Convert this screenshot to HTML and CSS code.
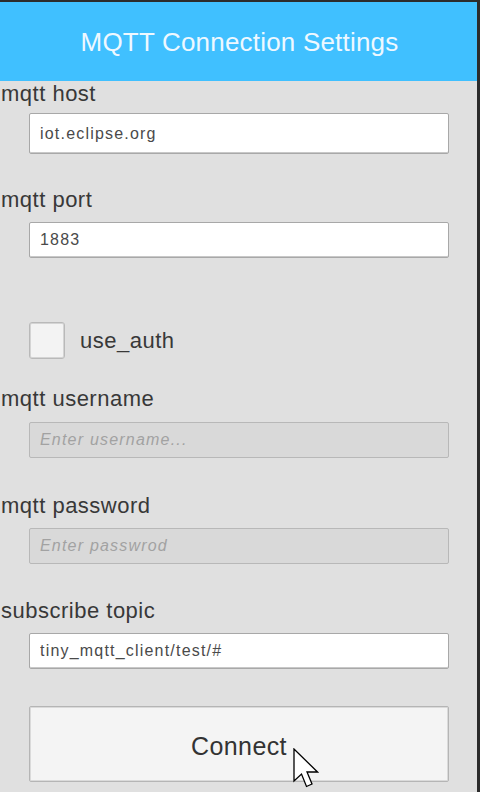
FILE: index.html
```html
<!DOCTYPE html>
<html lang="en">
<head>
<meta charset="utf-8">
<title>MQTT Connection Settings</title>
<link rel="stylesheet" href="styles.css">
</head>
<body>
<div class="app">
  <header class="header">
    <h1 class="title">MQTT Connection Settings</h1>
  </header>
  <main class="form">
    <div class="field field-host">
      <label class="label">mqtt host</label>
      <input class="input input-tall" type="text" value="iot.eclipse.org">
    </div>
    <div class="field field-port">
      <label class="label">mqtt port</label>
      <input class="input" type="text" value="1883">
    </div>
    <div class="check-row">
      <input class="checkbox" type="checkbox">
      <span class="check-label">use_auth</span>
    </div>
    <div class="field field-user">
      <label class="label">mqtt username</label>
      <input class="input input-disabled" type="text" placeholder="Enter username..." disabled>
    </div>
    <div class="field field-pass">
      <label class="label">mqtt password</label>
      <input class="input input-disabled" type="text" placeholder="Enter passwrod" disabled>
    </div>
    <div class="field field-topic">
      <label class="label">subscribe topic</label>
      <input class="input" type="text" value="tiny_mqtt_client/test/#">
    </div>
    <div class="button-wrap">
      <button class="button" type="button">Connect</button>
      <svg class="cursor" width="26" height="42" viewBox="0 0 26 42" aria-hidden="true">
        <polygon points="1,1 1,33 8.5,26 13.5,38.5 19,36 14,24 24.5,24" fill="#ffffff" stroke="#000000" stroke-width="1.3" stroke-linejoin="miter"/>
      </svg>
    </div>
  </main>
</div>
</body>
</html>
```
FILE: styles.css
```css
* {
  box-sizing: border-box;
}

html, body {
  margin: 0;
  padding: 0;
}

body {
  width: 480px;
  height: 792px;
  overflow: hidden;
  background: #2c2c2c;
  font-family: "Liberation Sans", Arial, sans-serif;
}

.app {
  width: 477px;
  height: 790px;
  margin-top: 2px;
  background: #e0e0e0;
  display: flex;
  flex-direction: column;
}

.header {
  height: 79px;
  background: #40c0ff;
  display: flex;
  align-items: center;
  justify-content: center;
  padding-left: 2px;
}

.title {
  margin: 0;
  font-size: 26px;
  font-weight: normal;
  letter-spacing: 0.2px;
  color: #eef8ff;
  line-height: 30px;
}

.form {
  display: flex;
  flex-direction: column;
}

.field {
  display: flex;
  flex-direction: column;
}

.label {
  font-size: 22px;
  line-height: 26px;
  letter-spacing: 0.5px;
  color: #383838;
  padding-left: 1px;
}

.input {
  display: block;
  margin: 9px 0 0 29px;
  width: 420px;
  height: 36px;
  padding: 0 0 0 10px;
  border: 1px solid #a8a8a8;
  border-radius: 2px;
  background: #ffffff;
  font-family: "Liberation Sans", Arial, sans-serif;
  font-size: 16px;
  letter-spacing: 1.2px;
  color: #4a4a4a;
  outline: none;
  box-shadow: inset 0 -1px 0 #c8c8c8;
}

.input-tall {
  height: 41px;
  margin-top: 6px;
}

.input-disabled {
  background: #d9d9d9;
  border-color: #b8b8b8;
  box-shadow: none;
}

.input-disabled::placeholder {
  font-style: italic;
  color: #a2a2a2;
}

.field-port {
  margin-top: 33px;
}

.check-row {
  margin-top: 64px;
  display: flex;
  align-items: center;
  height: 37px;
}

.checkbox {
  appearance: none;
  -webkit-appearance: none;
  margin: 0 0 0 29px;
  width: 36px;
  height: 37px;
  background: #f3f3f3;
  border: 1px solid #b9b9b9;
  border-radius: 3px;
  box-shadow: inset 0 0 0 1px #d4d4d4;
}

.check-label {
  margin-left: 15px;
  font-size: 22px;
  line-height: 36px;
  letter-spacing: 0.5px;
  color: #383838;
}

.field-user {
  margin-top: 27px;
}

.field-user .input {
  margin-top: 10px;
}

.field-pass {
  margin-top: 35px;
}

.field-topic {
  margin-top: 34px;
}

.button-wrap {
  position: relative;
  margin: 37px 0 0 29px;
  width: 420px;
}

.button {
  display: block;
  width: 420px;
  height: 76px;
  background: #f4f4f4;
  border: 1px solid #b5b5b5;
  border-radius: 2px;
  box-shadow: inset 0 0 0 1px #dadada;
  font-family: "Liberation Sans", Arial, sans-serif;
  font-size: 25px;
  letter-spacing: 0.4px;
  color: #333333;
  padding: 0;
  padding-top: 4px;
}

.cursor {
  position: absolute;
  left: 264px;
  top: 42px;
}
```
